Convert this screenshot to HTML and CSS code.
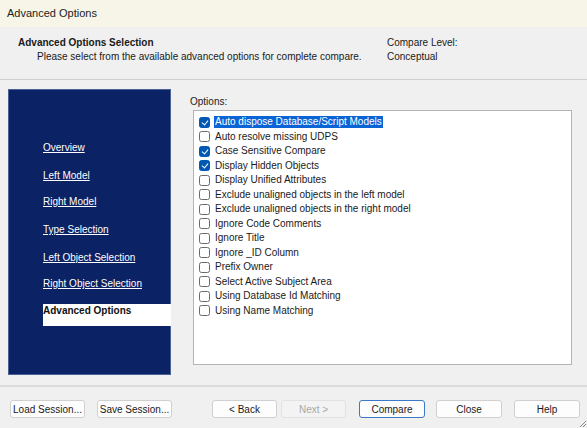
FILE: index.html
```html
<!DOCTYPE html>
<html>
<head>
<meta charset="utf-8">
<link rel="stylesheet" href="styles.css">
</head>
<body>
<div class="window">
  <div class="titlebar">Advanced Options</div>
  <div class="header">
    <div class="header-left">
      <div class="header-title">Advanced Options Selection</div>
      <div class="header-sub">Please select from the available advanced options for complete compare.</div>
    </div>
    <div class="header-right">
      <div>Compare Level:</div>
      <div>Conceptual</div>
    </div>
  </div>
  <div class="main">
    <div class="nav">
      <a class="nav-link h28">Overview</a>
      <a class="nav-link h26">Left Model</a>
      <a class="nav-link h28">Right Model</a>
      <a class="nav-link h28">Type Selection</a>
      <a class="nav-link h26">Left Object Selection</a>
      <a class="nav-link h27">Right Object Selection</a>
      <div class="nav-current">Advanced Options</div>
    </div>
    <div class="options">
      <div class="options-label">Options:</div>
      <div class="listbox">
        <div class="row"><span class="cb checked"></span><span class="lbl selected">Auto dispose Database/Script Models</span></div>
        <div class="row"><span class="cb"></span><span class="lbl">Auto resolve missing UDPS</span></div>
        <div class="row"><span class="cb checked"></span><span class="lbl">Case Sensitive Compare</span></div>
        <div class="row"><span class="cb checked"></span><span class="lbl">Display Hidden Objects</span></div>
        <div class="row"><span class="cb"></span><span class="lbl">Display Unified Attributes</span></div>
        <div class="row"><span class="cb"></span><span class="lbl">Exclude unaligned objects in the left model</span></div>
        <div class="row"><span class="cb"></span><span class="lbl">Exclude unaligned objects in the right model</span></div>
        <div class="row"><span class="cb"></span><span class="lbl">Ignore Code Comments</span></div>
        <div class="row"><span class="cb"></span><span class="lbl">Ignore Title</span></div>
        <div class="row"><span class="cb"></span><span class="lbl">Ignore _ID Column</span></div>
        <div class="row"><span class="cb"></span><span class="lbl">Prefix Owner</span></div>
        <div class="row"><span class="cb"></span><span class="lbl">Select Active Subject Area</span></div>
        <div class="row"><span class="cb"></span><span class="lbl">Using Database Id Matching</span></div>
        <div class="row"><span class="cb"></span><span class="lbl">Using Name Matching</span></div>
      </div>
    </div>
  </div>
  <div class="footer">
    <div class="group">
      <button class="btn">Load Session...</button>
      <button class="btn">Save Session...</button>
    </div>
    <div class="group right">
      <button class="btn nav-btn">&lt; Back</button>
      <button class="btn nav-btn disabled">Next &gt;</button>
      <button class="btn nav-btn default">Compare</button>
      <button class="btn nav-btn close">Close</button>
      <button class="btn nav-btn help">Help</button>
    </div>
    <svg class="grip" width="8" height="8" viewBox="0 0 8 8"><path d="M7 1 L1 7 M7 4 L4 7" stroke="#8a8a8a" stroke-width="1" fill="none"/></svg>
  </div>
</div>
</body>
</html>
```
FILE: styles.css
```css
html, body {
  margin: 0;
  padding: 0;
}
body {
  width: 587px;
  height: 428px;
  overflow: hidden;
  background: #f0f0f0;
  font-family: "Liberation Sans", "DejaVu Sans", sans-serif;
  font-size: 10px;
  color: #1a1a1a;
}
.window {
  position: relative;
  width: 587px;
  height: 428px;
  display: flex;
  flex-direction: column;
}
.titlebar {
  height: 27px;
  box-sizing: border-box;
  background: #f6f5e7;
  padding: 7px 0 0 7px;
  font-size: 11px;
  color: #222;
}
.header {
  height: 53px;
  box-sizing: border-box;
  border-bottom: 1px solid #cfcfcf;
  display: flex;
  padding: 10px 0 0 18px;
  background: #f0f0f0;
  white-space: nowrap;
}
.header-left {
  width: 369px;
}
.header-title {
  font-weight: bold;
  height: 14px;
}
.header-sub {
  padding-left: 19px;
}
.header-right div {
  height: 14px;
}
.main {
  display: flex;
  padding: 9px 0 0 8px;
  height: 307px;
  box-sizing: border-box;
  border-bottom: 2px solid #dcdcdc;
}
.nav {
  width: 163px;
  height: 286px;
  background: #0b2264;
  border: 1px solid #4a5f94;
  box-sizing: border-box;
  display: flex;
  flex-direction: column;
  padding: 51px 0 0 34px;
}
.nav-link {
  color: #ffffff;
  text-decoration: underline;
  line-height: 14px;
  white-space: nowrap;
}
.h26 { height: 26px; }
.h27 { height: 27px; }
.h28 { height: 28px; }
.nav-current {
  background: #ffffff;
  color: #111;
  font-weight: bold;
  height: 22px;
  margin-right: -1px;
  box-sizing: border-box;
  padding-top: 1px;
}
.options {
  display: flex;
  flex-direction: column;
  padding-left: 19px;
}
.options-label {
  height: 14px;
  padding-top: 7px;
}
.listbox {
  margin-left: 3px;
  width: 379px;
  height: 255px;
  box-sizing: border-box;
  background: #ffffff;
  border: 1px solid #b4b4b8;
  padding: 4px 0 0 5px;
}
.row {
  height: 14.5px;
  display: flex;
  align-items: center;
}
.cb {
  width: 11px;
  height: 11px;
  border: 1px solid #6a6a6a;
  border-radius: 2.5px;
  box-sizing: border-box;
  margin-right: 4px;
  flex: none;
  position: relative;
  background: #fff;
}
.cb.checked {
  background: #0058b4;
  border-color: #0058b4;
}
.cb.checked::after {
  content: "";
  position: absolute;
  left: 3px;
  top: 1px;
  width: 3px;
  height: 5px;
  border-right: 1.3px solid #fff;
  border-bottom: 1.3px solid #fff;
  transform: rotate(40deg);
}
.lbl {
  padding: 0 1px;
  line-height: 12px;
}
.lbl.selected {
  background: #0a64d6;
  color: #fff;
}
.footer {
  position: relative;
  flex: 1;
  display: flex;
  padding: 13px 0 0 10px;
}
.group {
  display: flex;
  gap: 12px;
}
.group.right {
  margin-left: 40px;
  gap: 4px;
}
.btn {
  font-family: "Liberation Sans", "DejaVu Sans", sans-serif;
  font-size: 10px;
  height: 18px;
  width: 75px;
  padding: 0;
  background: #fdfdfd;
  border: 1px solid #d0d0d0;
  border-radius: 3px;
  color: #1a1a1a;
  white-space: nowrap;
}
.nav-btn {
  width: 65px;
}
.nav-btn.default {
  margin-left: 9px;
  border: 1px solid #3a78c8;
  width: 66px;
}
.nav-btn.close {
  margin-left: 7px;
  width: 66px;
}
.nav-btn.help {
  margin-left: 8px;
  width: 66px;
}
.btn.disabled {
  color: #a8a8a8;
  background: #f3f3f3;
  border-color: #e2e2e2;
}
.grip {
  position: absolute;
  right: 0;
  bottom: 0;
}
```
